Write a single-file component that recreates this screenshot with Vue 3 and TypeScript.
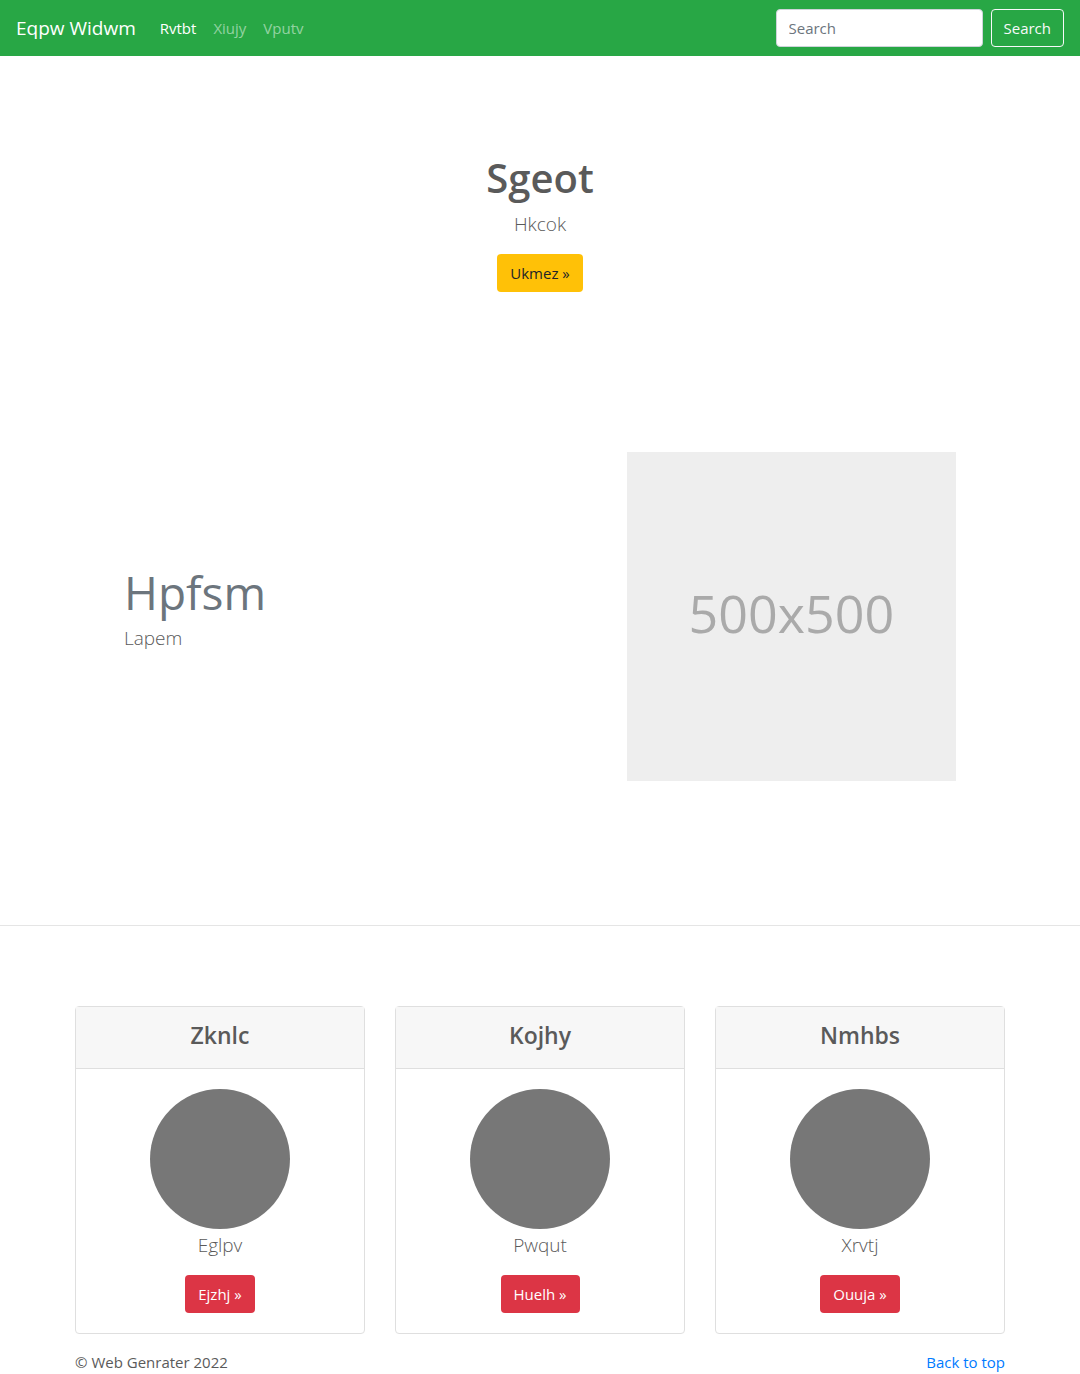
<script setup lang="ts">
import { ref } from 'vue'

interface NavItem {
  label: string
  active: boolean
}

interface Card {
  title: string
  text: string
  action: string
}

const navItems: NavItem[] = [
  { label: 'Rvtbt', active: true },
  { label: 'Xiujy', active: false },
  { label: 'Vputv', active: false },
]

const cards: Card[] = [
  { title: 'Zknlc', text: 'Eglpv', action: 'Ejzhj' },
  { title: 'Kojhy', text: 'Pwqut', action: 'Huelh' },
  { title: 'Nmhbs', text: 'Xrvtj', action: 'Ouuja' },
]

const query = ref('')
</script>

<template>
  <div id="top" class="page">
    <header class="navbar">
      <a class="brand" href="#top">Eqpw Widwm</a>
      <nav class="nav">
        <a
          v-for="item in navItems"
          :key="item.label"
          href="#top"
          class="nav-link"
          :class="{ active: item.active }"
        >{{ item.label }}</a>
      </nav>
      <form class="search" role="search" @submit.prevent>
        <input v-model="query" class="search-input" type="search" placeholder="Search" aria-label="Search">
        <button class="btn btn-outline" type="submit">Search</button>
      </form>
    </header>

    <main>
      <section class="hero">
        <h1 class="hero-title">Sgeot</h1>
        <p class="lead">Hkcok</p>
        <a class="btn btn-warning" href="#top">Ukmez »</a>
      </section>

      <section class="container">
        <div class="feature">
          <div class="feature-text">
            <h2 class="feature-title">Hpfsm</h2>
            <p class="lead">Lapem</p>
          </div>
          <div class="placeholder" role="img" aria-label="500x500">500x500</div>
        </div>
      </section>

      <hr class="divider">

      <section class="container cards">
        <article v-for="card in cards" :key="card.title" class="card">
          <header class="card-header">
            <h4 class="card-title">{{ card.title }}</h4>
          </header>
          <div class="card-body">
            <svg class="avatar" viewBox="0 0 140 140" aria-hidden="true">
              <circle cx="70" cy="70" r="70" fill="#777" />
            </svg>
            <p class="lead">{{ card.text }}</p>
            <a class="btn btn-danger" href="#top">{{ card.action }} »</a>
          </div>
        </article>
      </section>
    </main>

    <footer class="container footer">
      <span>© Web Genrater 2022</span>
      <a class="footer-link" href="#top">Back to top</a>
    </footer>
  </div>
</template>

<style>
body {
  margin: 0;
  background: #fff;
}
</style>

<style scoped>
.page,
.page * {
  box-sizing: border-box;
}

.page {
  color: #5a5a5a;
  font-family: "Open Sans", "Noto Sans", sans-serif;
  font-size: 15px;
  line-height: 24px;
}

.page a {
  text-decoration: none;
}

.navbar {
  display: flex;
  align-items: center;
  min-height: 56px;
  padding: 8px 16px;
  background: #28a745;
}

.navbar .brand {
  margin-right: 16px;
  color: #fff;
  font-size: 19px;
  line-height: 32px;
}

.nav {
  display: flex;
  flex: 1;
  gap: 1px;
}

.nav-link {
  padding: 8px;
  color: rgba(255, 255, 255, 0.5);
}

.nav-link.active {
  color: #fff;
}

.search {
  display: flex;
  gap: 8px;
}

.search-input {
  width: 207px;
  height: 38px;
  padding: 6px 12px;
  border: 1px solid #ced4da;
  border-radius: 4px;
  background: #fff;
  color: #495057;
  font: inherit;
  appearance: none;
}

.search-input::placeholder {
  color: #6c757d;
  opacity: 1;
}

.btn {
  display: inline-block;
  padding: 6px 12px;
  border: 1px solid transparent;
  border-radius: 4px;
  font: inherit;
  text-align: center;
  white-space: nowrap;
  cursor: pointer;
}

.btn-outline {
  border-color: #f8f9fa;
  background: transparent;
  color: #f8f9fa;
}

.btn-warning {
  background: #ffc107;
  color: #212529;
}

.btn-danger {
  background: #dc3545;
  color: #fff;
}

.lead {
  margin: 0 0 14px;
  font-size: 19px;
  font-weight: 300;
  line-height: 32px;
}

.hero {
  display: flex;
  flex-direction: column;
  align-items: center;
  padding: 96px 16px;
}

.hero-title {
  margin: 0 0 4px;
  font-size: 40px;
  font-weight: 600;
  line-height: 52px;
}

.container {
  max-width: 960px;
  margin: 0 auto;
  padding: 0 15px;
}

.feature {
  display: grid;
  grid-template-columns: repeat(12, 1fr);
  gap: 30px;
  align-items: center;
  padding: 64px 49px 144px;
}

.feature-text {
  grid-column: span 7;
}

.feature-title {
  margin: 0 0 4px;
  color: #6c757d;
  font-size: 46px;
  font-weight: 400;
  line-height: 52px;
}

.placeholder {
  display: flex;
  grid-column: span 5;
  align-items: center;
  justify-content: center;
  aspect-ratio: 1;
  padding-bottom: 8px;
  background: #eee;
  color: #aaa;
  font-size: 52px;
}

.divider {
  margin: 0 0 80px;
  border: 0;
  border-top: 1px solid #e5e5e5;
}

.cards {
  display: grid;
  grid-template-columns: repeat(3, 1fr);
  gap: 30px;
}

.card {
  border: 1px solid #dfdfdf;
  border-radius: 4px;
  text-align: center;
}

.card-header {
  padding: 12px 20px;
  border-bottom: 1px solid #dfdfdf;
  background: #f7f7f7;
}

.card-title {
  margin: 0 0 5px;
  font-size: 23px;
  font-weight: 600;
  line-height: 32px;
}

.card-body {
  padding: 20px;
}

.avatar {
  display: block;
  width: 140px;
  height: 140px;
  margin: 0 auto;
}

.card-body .btn {
  display: block;
  width: fit-content;
  margin: 0 auto;
}

.footer {
  display: flex;
  justify-content: space-between;
  padding-top: 16px;
}

.footer .footer-link {
  color: #007bff;
}
</style>
